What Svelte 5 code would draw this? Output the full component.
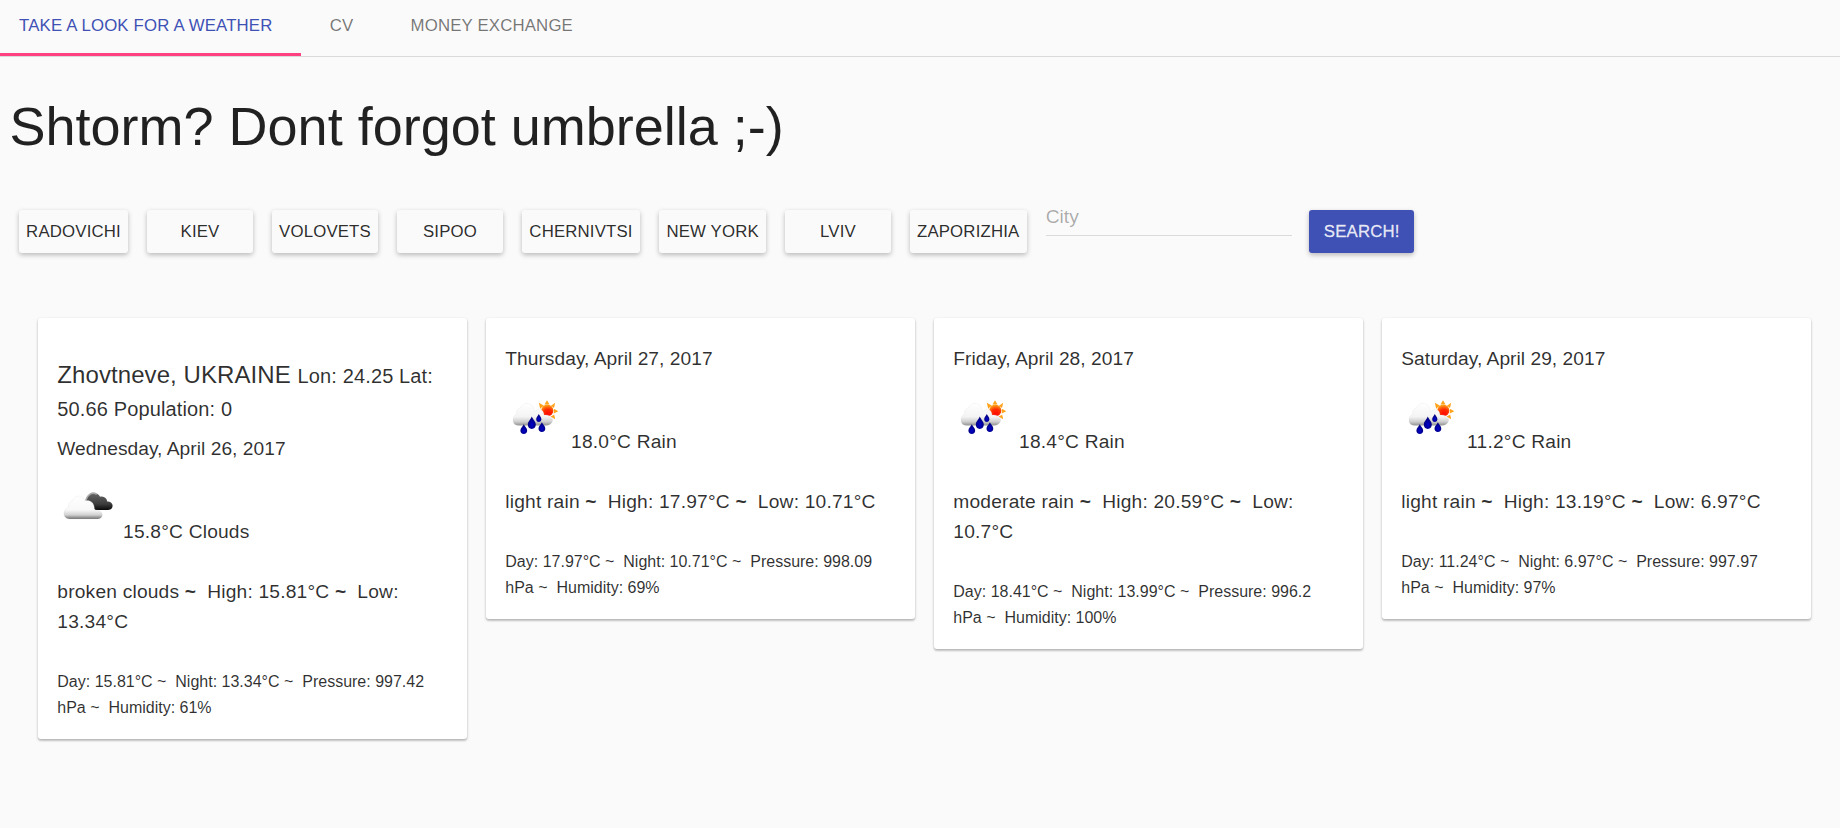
<script>
  const tabs = ['Take a look for a weather', 'CV', 'Money exchange'];
  const cities = [
    { name: 'Radovichi', width: 109 },
    { name: 'Kiev', width: 106 },
    { name: 'Volovets', width: 106 },
    { name: 'Sipoo', width: 106 },
    { name: 'Chernivtsi', width: 118 },
    { name: 'New York', width: 107.2 },
    { name: 'Lviv', width: 105.5 },
    { name: 'Zaporizhia', width: 117 }
  ];
  const place = { name: 'Zhovtneve, UKRAINE', lon: '24.25', lat: '50.66', population: 0 };
  const days = [
    { place, date: 'Wednesday, April 26, 2017', temp: '15.8', kind: 'Clouds', text: 'broken clouds', high: '15.81', low: '13.34', day: '15.81', night: '13.34', pressure: '997.42', humidity: 61 },
    { date: 'Thursday, April 27, 2017', temp: '18.0', kind: 'Rain', text: 'light rain', high: '17.97', low: '10.71', day: '17.97', night: '10.71', pressure: '998.09', humidity: 69 },
    { date: 'Friday, April 28, 2017', temp: '18.4', kind: 'Rain', text: 'moderate rain', high: '20.59', low: '10.7', day: '18.41', night: '13.99', pressure: '996.2', humidity: 100 },
    { date: 'Saturday, April 29, 2017', temp: '11.2', kind: 'Rain', text: 'light rain', high: '13.19', low: '6.97', day: '11.24', night: '6.97', pressure: '997.97', humidity: 97 }
  ];
  let active = $state(0);
  let city = $state('');
</script>

{#snippet clouds()}
  <svg class="icon" viewBox="0 0 60 60" aria-hidden="true">
    <defs>
      <linearGradient id="dark" x1="0" y1="0" x2="0" y2="1">
        <stop offset="0" stop-color="#666" /><stop offset=".65" stop-color="#3c3c3c" /><stop offset="1" stop-color="#080808" />
      </linearGradient>
      <linearGradient id="pale" x1="0" y1="0" x2="0" y2="1">
        <stop offset="0" stop-color="#fff" /><stop offset=".6" stop-color="#f8f8f8" /><stop offset=".82" stop-color="#d2d2d2" /><stop offset="1" stop-color="#707070" />
      </linearGradient>
    </defs>
    <path d="M27.5 23C29 17.500 32 14.900 36 15.100C39.500 15.400 41 17 42 18.700C46 17.700 48.800 20 49.200 23.600C52.500 23.600 54.800 25.500 54.600 28C54.400 30.600 52.500 32 50 32H37Z" fill="url(#dark)" />
    <path d="M27.800 22.500C29.500 16.500 34 13.300 38.800 16.300" fill="none" stroke="#aaa" stroke-width="1.500" />
    <path d="M11.500 41C8 41 5.700 38.500 5.900 35.200C6.100 32 8 29.800 10.500 29.200C9.800 25.700 12 23.300 14.500 22.700C15.500 19.500 18 18 21 18.100C24 18.200 26 20 26.800 22.700C31.500 21.500 35.500 24 36.200 28.800C36.500 31 36.500 31.500 37 31.800C41.500 32 44.500 34 44.300 37C44.100 39.500 42 41 39.500 41Z" fill="url(#pale)" stroke="#ccc" stroke-opacity=".3" stroke-width=".6" />
  </svg>
{/snippet}

{#snippet rain()}
  <svg class="icon" viewBox="0 0 60 60" aria-hidden="true">
    <defs>
      <radialGradient id="sun" cx=".55" cy=".8" r=".8">
        <stop offset="0" stop-color="#ff0800" /><stop offset=".5" stop-color="#ff2c00" /><stop offset="1" stop-color="#ffae1c" />
      </radialGradient>
      <linearGradient id="fluff" x1="0" y1="0" x2="0" y2="1">
        <stop offset="0" stop-color="#fff" /><stop offset=".6" stop-color="#f4f4f4" /><stop offset=".82" stop-color="#d0d0d0" /><stop offset="1" stop-color="#929292" />
      </linearGradient>
      <radialGradient id="drop" cx=".5" cy=".65" r=".6">
        <stop offset="0" stop-color="#0000cc" /><stop offset="1" stop-color="#000070" />
      </radialGradient>
    </defs>
    <path fill="#ffa21c" d="M38.500 16.500L41 12.300L43.500 16.500ZM45 17.800L49.200 14.800L48 20ZM47.800 20.800L52.300 23.200L47.800 25.600ZM44.500 28.500L48.200 26.800L49.200 31.300ZM32.800 14.800L34.200 20.800L37.800 17.500Z" />
    <circle cx="41.300" cy="22.500" r="6" fill="url(#sun)" />
    <path d="M12.500 37.500C8.500 37.500 6.800 34.500 7 31.500C7.300 28.700 8.700 27 10.700 26C10.200 22.700 12 20.500 14.700 19.700C16 16.500 18.500 15.300 21.500 15.500C24.500 15.700 27 17.700 27.700 20.700C28.500 22.300 28.800 23.200 29 24C30.500 22 32 21 34 21.500C36.500 22 38 24 38 27C41.500 26.500 45.500 27.500 46.500 31C47.200 34.500 44 37.500 40.500 37.500Z" fill="url(#fluff)" stroke="#ccc" stroke-opacity=".3" stroke-width=".6" />
    <g fill="url(#drop)">
      <path d="M25.800 28.500C26.800 31.500 29.800 33.300 29.800 36.600C29.800 39.200 28.200 41 25.800 41S21.800 39.200 21.800 36.600C21.800 33.300 24.800 31.500 25.800 28.500Z" />
      <path d="M32.800 26C33.500 28 35.400 29.200 35.400 31.200C35.400 32.800 34.400 34 32.800 34S30.200 32.800 30.200 31.200C30.200 29.200 32.100 28 32.800 26Z" />
      <path d="M17.800 36.200C18.600 38.500 21.200 40 21.200 42.500C21.200 44.600 19.800 46 17.800 46S14.400 44.600 14.400 42.500C14.400 40 17 38.500 17.800 36.200Z" />
      <path d="M35.900 34.200C36.700 36.500 39.300 38 39.300 40.500C39.300 42.600 37.900 44 35.900 44S32.500 42.600 32.500 40.500C32.500 38 35.100 36.500 35.900 34.200Z" />
    </g>
  </svg>
{/snippet}

<nav>
  {#each tabs as tab, i}
    <button class="tab" class:active={active === i} onclick={() => (active = i)}>{tab}</button>
  {/each}
</nav>

<h1>Shtorm? Dont forgot umbrella ;-)</h1>

<form class="search" onsubmit={(e) => e.preventDefault()}>
  {#each cities as c}
    <button type="button" class="raised" style="width: {c.width}px">{c.name}</button>
  {/each}
  <input placeholder="City" bind:value={city} />
  <button class="raised primary">Search!</button>
</form>

<main>
  {#each days as d}
    <article>
      {#if d.place}
        <h2>{d.place.name} <small>Lon: {d.place.lon} Lat: {d.place.lat} Population: {d.place.population}</small></h2>
      {/if}
      <p class="date">{d.date}</p>
      <div class="temp">
        {#if d.kind === 'Clouds'}{@render clouds()}{:else}{@render rain()}{/if}
        <span>{`${d.temp}°C ${d.kind}`}</span>
      </div>
      <p class="summary">{d.text} <b>~</b>&nbsp; High: {d.high}°C <b>~</b>&nbsp; Low: {d.low}°C</p>
      <p class="details">Day: {d.day}°C ~&nbsp; Night: {d.night}°C ~&nbsp; Pressure: {d.pressure} hPa ~&nbsp; Humidity: {d.humidity}%</p>
    </article>
  {/each}
</main>

<style>
  :global(body) {
    margin: 0;
    background: #fafafa;
    color: rgba(0, 0, 0, 0.87);
    font-family: 'Liberation Sans', Arial, sans-serif;
  }
  :global(#app) {
    min-height: 828px;
  }
  button,
  input {
    font-family: inherit;
    border: 0;
    margin: 0;
    box-sizing: border-box;
    background: none;
  }
  nav {
    display: flex;
    height: 56px;
    border-bottom: 1px solid #dadada;
  }
  .tab {
    height: 56px;
    padding: 0 28.6px 1px;
    font-size: 16.8px;
    line-height: 24px;
    letter-spacing: 0.01em;
    text-transform: uppercase;
    color: rgba(0, 0, 0, 0.54);
    border-bottom: 3px solid transparent;
  }
  .tab:first-child {
    padding-left: 19px;
  }
  .tab.active {
    color: #3f51b5;
    border-bottom-color: #ff4081;
  }
  h1 {
    margin: 38px 0 0 9.5px;
    font-size: 54px;
    font-weight: 400;
    line-height: 62px;
  }
  .search {
    display: flex;
    align-items: flex-start;
    gap: 19px;
    padding: 53px 0 0 19px;
  }
  .raised {
    flex: none;
    height: 43px;
    padding: 1px 0 0;
    border-radius: 3px;
    font-size: 16.8px;
    letter-spacing: 0.01em;
    text-transform: uppercase;
    white-space: nowrap;
    color: rgba(0, 0, 0, 0.84);
    background: #fafafa;
    box-shadow: 0 2px 5px rgba(0, 0, 0, 0.26);
  }
  .primary {
    width: 105px;
    margin-left: -2px;
    padding-left: 1px;
    color: rgba(255, 255, 255, 0.87);
    background: #3f51b5;
    -webkit-text-stroke: 0.3px rgba(255, 255, 255, 0.7);
  }
  input {
    width: 246px;
    height: 26px;
    padding: 0 0 11px;
    border-bottom: 1px solid #dadada;
    border-radius: 0;
    font-size: 19.2px;
    line-height: 22px;
    outline: 0;
  }
  input::placeholder {
    color: rgba(0, 0, 0, 0.32);
    opacity: 1;
  }
  main {
    display: grid;
    grid-template-columns: repeat(4, minmax(0, 1fr));
    align-items: start;
    gap: 19px;
    padding: 65px 29px 0 38px;
  }
  article {
    padding: 26px 20px 17.5px 19.3px;
    border-radius: 3px;
    background: #fff;
    color: rgba(0, 0, 0, 0.82);
    box-shadow: 0 1px 3px rgba(0, 0, 0, 0.2), 0 2px 2px rgba(0, 0, 0, 0.14);
  }
  h2,
  p {
    margin: 0;
    font-weight: 400;
  }
  h2 {
    margin: 14px 0 10px;
    font-size: 24px;
    line-height: 33px;
    letter-spacing: 0.08px;
  }
  h2 small {
    font-size: 20px;
    line-height: 1;
    letter-spacing: 0.13px;
  }
  .date,
  .temp,
  .summary {
    font-size: 19.2px;
    line-height: 30px;
  }
  .date {
    letter-spacing: 0.03px;
  }
  .temp,
  .summary {
    letter-spacing: 0.01em;
  }
  .temp {
    display: flex;
    align-items: baseline;
    gap: 5px;
    margin-top: 14px;
  }
  .summary {
    margin-top: 30px;
  }
  .details {
    margin-top: 32px;
    padding-right: 12px;
    font-size: 16px;
    line-height: 26px;
  }
  .icon {
    flex: none;
    width: 60px;
    height: 60px;
    margin-left: 0.8px;
  }
</style>
